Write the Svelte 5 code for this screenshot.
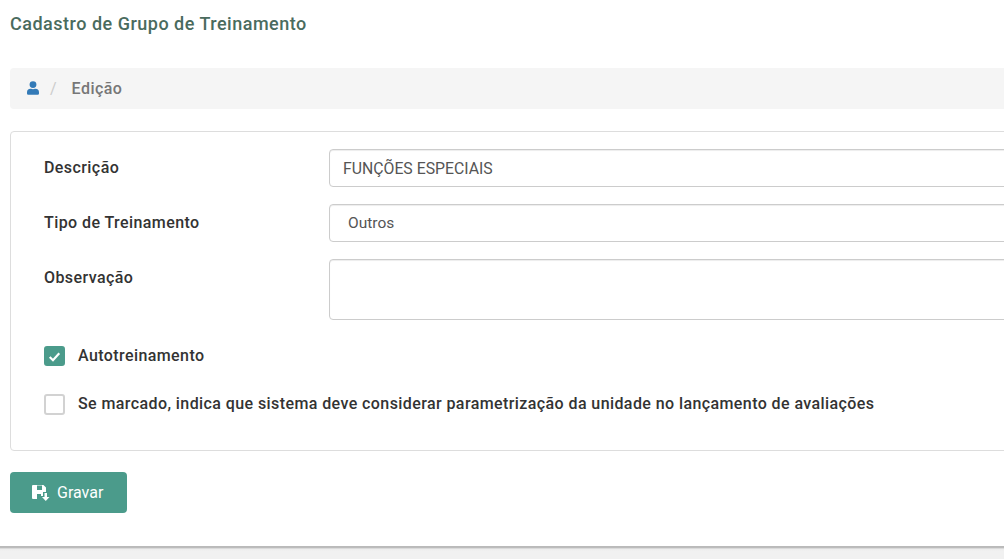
<script lang="ts">
  let description = $state('FUNÇÕES ESPECIAIS');
  let trainingType = $state('Outros');
  let notes = $state('');
  let selfTraining = $state(true);
  let useUnitParams = $state(false);
</script>

<div class="page">
  <main class="content">
    <h1 class="page-title">Cadastro de Grupo de Treinamento</h1>

    <nav class="breadcrumb">
      <svg class="user-icon" viewBox="0 0 448 512" aria-hidden="true">
        <path d="M224 256a128 128 0 1 0 0-256 128 128 0 0 0 0 256zm90 32h-17a174 174 0 0 1-146 0h-17A134 134 0 0 0 0 422v42a48 48 0 0 0 48 48h352a48 48 0 0 0 48-48v-42a134 134 0 0 0-134-134z" />
      </svg>
      <span class="crumb-sep">/</span>
      <span class="crumb-current">Edição</span>
    </nav>

    <form class="card" onsubmit={(e) => e.preventDefault()}>
      <div class="field">
        <label class="field-label" for="descricao">Descrição</label>
        <input id="descricao" class="control" type="text" bind:value={description} />
      </div>
      <div class="field">
        <label class="field-label" for="tipo">Tipo de Treinamento</label>
        <select id="tipo" class="control select" bind:value={trainingType}>
          <option>Outros</option>
        </select>
      </div>
      <div class="field">
        <label class="field-label" for="observacao">Observação</label>
        <textarea id="observacao" class="control area" bind:value={notes}></textarea>
      </div>

      <label class="check first">
        <input type="checkbox" bind:checked={selfTraining} />
        <span class="box">
          <svg viewBox="0 0 12 12" aria-hidden="true"><path d="M1.6 6.4 4.6 9.400 10.400 3" /></svg>
        </span>
        <span class="check-text">Autotreinamento</span>
      </label>
      <label class="check second">
        <input type="checkbox" bind:checked={useUnitParams} />
        <span class="box">
          <svg viewBox="0 0 12 12" aria-hidden="true"><path d="M1.6 6.4 4.6 9.400 10.400 3" /></svg>
        </span>
        <span class="check-text">Se marcado, indica que sistema deve considerar parametrização da unidade no lançamento de avaliações</span>
      </label>
    </form>

    <button type="button" class="save-btn">
      <svg class="save-icon" viewBox="0 0 18 16" aria-hidden="true">
        <path fill-rule="evenodd" d="M1 0H11.500L14 2.500V7H11V11H9V9H5V14H1A1 1 0 0 1 0 13V1A1 1 0 0 1 1 0zM5 0.500V5H10V0.500z" />
        <path d="M12.500 8H15V12H17.500L13.750 16 10 12H12.500z" />
      </svg>
      Gravar
    </button>
  </main>
  <div class="footer-strip"></div>
</div>

<style>
  :global(body) {
    margin: 0;
    background: #fff;
    overflow: hidden;
  }

  .page {
    width: 1004px;
    height: 559px;
    display: flex;
    flex-direction: column;
    overflow: hidden;
    font-family: Roboto, "Liberation Sans", sans-serif;
    background: #fff;
  }

  .content {
    width: 1060px;
    height: 546px;
    flex: none;
    box-sizing: border-box;
    padding: 13px 0 0 10px;
  }

  .page-title {
    margin: 0 0 34px;
    height: 21px;
    line-height: 21px;
    font-size: 18px;
    font-weight: 500;
    letter-spacing: 0.5px;
    color: #4a6b5e;
  }

  .breadcrumb {
    display: flex;
    align-items: center;
    height: 41px;
    padding-left: 17px;
    border-radius: 4px;
    background: #f5f5f5;
    font-size: 16px;
  }

  .user-icon {
    width: 12px;
    height: 14px;
    margin-top: -2px;
    fill: #337ab7;
  }

  .crumb-sep {
    margin-left: 11px;
    color: #ccc;
    font-weight: 400;
  }

  .crumb-current {
    margin-left: 15px;
    margin-top: -1px;
    color: #777;
    font-weight: 500;
    letter-spacing: 0.45px;
  }

  .card {
    margin-top: 22px;
    height: 320px;
    box-sizing: border-box;
    padding: 17px 0 0 33px;
    border: 1px solid #ddd;
    border-radius: 4px;
  }

  .field {
    display: flex;
    align-items: flex-start;
    margin-bottom: 17px;
  }

  .field-label {
    width: 285px;
    flex: none;
    padding-top: 9px;
    font-size: 16px;
    line-height: 19px;
    font-weight: 500;
    letter-spacing: 0.42px;
    color: #333;
  }

  .control {
    display: block;
    flex: 1;
    min-width: 0;
    height: 38px;
    box-sizing: border-box;
    margin: 0;
    padding: 0 13px;
    border: 1px solid #ccc;
    border-radius: 4px;
    background: #fff;
    box-shadow: inset 0 1px 1px rgba(0, 0, 0, 0.075);
    font: 400 15.8px Roboto, "Liberation Sans", sans-serif;
    color: #555;
    outline: none;
  }

  .select {
    padding-left: 18px;
    font-size: 15.5px;
    appearance: none;
  }

  .area {
    height: 61px;
    resize: none;
  }

  .check {
    display: flex;
    align-items: center;
    height: 20px;
  }

  .check.first {
    margin-top: 26px;
  }

  .check.second {
    margin-top: 28px;
  }

  .check input {
    position: absolute;
    opacity: 0;
    width: 0;
    height: 0;
  }

  .box {
    width: 21px;
    height: 20px;
    flex: none;
    box-sizing: border-box;
    display: flex;
    align-items: center;
    justify-content: center;
    border: 2px solid #d2d2d2;
    border-radius: 3px;
    background: #fff;
  }

  .second .box {
    height: 21px;
  }

  .box svg {
    display: none;
    width: 13px;
    height: 13px;
    fill: none;
    stroke: #fff;
    stroke-width: 2;
  }

  .check input:checked + .box {
    border-color: #4b9b8b;
    background: #4b9b8b;
  }

  .check input:checked + .box svg {
    display: block;
  }

  .check-text {
    margin-left: 13px;
    margin-top: -2px;
    font-size: 16px;
    font-weight: 500;
    letter-spacing: 0.41px;
    color: #333;
    white-space: nowrap;
  }

  .save-btn {
    display: flex;
    align-items: center;
    gap: 7px;
    margin-top: 21px;
    width: 117px;
    height: 41px;
    padding: 0 0 0 22px;
    border: 0;
    border-radius: 4px;
    background: #4b9b8b;
    color: #fff;
    cursor: pointer;
    font: 400 16px Roboto, "Liberation Sans", sans-serif;
  }

  .save-icon {
    width: 18px;
    height: 16px;
    fill: #fff;
  }

  .footer-strip {
    flex: 1;
    background: linear-gradient(#c4c4c4 0, #b0b0b0 1px, #c8c8c8 2px, #ececec 3px, #f1f1f1 5px);
  }
</style>
